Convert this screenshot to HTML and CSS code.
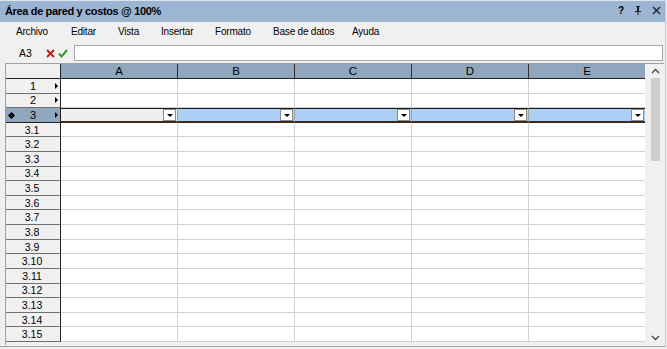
FILE: index.html
```html
<!DOCTYPE html>
<html lang="es">
<head>
  <meta charset="UTF-8">
  <title>Área de pared y costos @ 100%</title>
  <link rel="stylesheet" href="styles.css">
</head>
<body>
  <div class="window">
    <div class="titlebar">
      <span class="title">Área de pared y costos @ 100%</span>
      <span class="tools">
        <span class="tool">?</span>
        <svg class="tool pin" width="8" height="9" viewBox="0 0 8 9"><path d="M2 0h4v1H5v4h2v1H4.5v3h-1V6H1V5h2V1H2z" fill="#222"/></svg>
        <svg class="tool" width="9" height="9" viewBox="0 0 9 9"><path d="M1 1l7 7M8 1L1 8" stroke="#222" stroke-width="1.4"/></svg>
      </span>
    </div>

    <div class="menubar">
      <span class="menu m1">Archivo</span>
      <span class="menu m2">Editar</span>
      <span class="menu m3">Vista</span>
      <span class="menu m4">Insertar</span>
      <span class="menu m5">Formato</span>
      <span class="menu m6">Base de datos</span>
      <span class="menu">Ayuda</span>
    </div>

    <div class="formulabar">
      <span class="cellref">A3</span>
      <svg class="btn-cancel" width="9" height="9" viewBox="0 0 9 9"><path d="M1 1l7 7M8 1L1 8" stroke="#c8201c" stroke-width="2"/></svg>
      <svg class="btn-ok" width="10" height="9" viewBox="0 0 10 9"><path d="M1 4.5l2.6 3L9 1" stroke="#2f9a2a" stroke-width="2" fill="none"/></svg>
      <div class="formula"></div>
    </div>

    <div class="sheetwrap">
      <div class="sheet" id="sheet">
        <div class="row head">
          <div class="rh"></div>
          <div class="ch">A</div>
          <div class="ch">B</div>
          <div class="ch">C</div>
          <div class="ch">D</div>
          <div class="ch">E</div>
        </div>
      </div>
      <div class="scrollbar">
        <svg class="arrow" width="9" height="6" viewBox="0 0 9 6"><path d="M1 5l3.5-3.5L8 5" stroke="#444" stroke-width="1.3" fill="none"/></svg>
        <div class="track"><div class="thumb"></div></div>
        <svg class="arrow" width="9" height="6" viewBox="0 0 9 6"><path d="M1 1l3.5 3.5L8 1" stroke="#444" stroke-width="1.3" fill="none"/></svg>
      </div>
    </div>
  </div>

  <script>
    var sheet = document.getElementById('sheet');
    var labels = ['1', '2', '3'];
    for (var i = 1; i <= 15; i++) labels.push('3.' + i);

    labels.forEach(function (label) {
      var row = document.createElement('div');
      var sel = label === '3';
      var sub = label.indexOf('.') > -1;
      row.className = 'row' + (sel ? ' selected' : '') + (sub ? ' sub' : '');

      var rh = document.createElement('div');
      rh.className = 'rh';
      if (sel) rh.innerHTML += '<span class="dot"></span>';
      rh.innerHTML += '<span class="num">' + label + '</span>';
      if (!sub) rh.innerHTML += '<span class="tri"></span>';
      row.appendChild(rh);

      for (var c = 0; c < 5; c++) {
        var cell = document.createElement('div');
        cell.className = 'cell' + (sel && c === 0 ? ' active' : '');
        if (sel) cell.innerHTML = '<span class="drop"><span class="caret"></span></span>';
        row.appendChild(cell);
      }
      sheet.appendChild(row);
    });
  </script>
</body>
</html>
```

FILE: styles.css
```css
* { box-sizing: border-box; }
body {
  margin: 0;
  background-color: #f0f0f0;
  font-family: Tahoma, 'DejaVu Sans', sans-serif;
  font-size: 11px;
  color: #000;
}
.window {
  width: 666px;
  height: 347px;
  background-color: #f0f0f0;
  border-right: 1px solid #c8c8c8;
  border-bottom: 1px solid #a0a0a0;
  display: flex;
  flex-direction: column;
}
.titlebar {
  height: 22px;
  border-top: 1px solid #dde6f0;
  background-color: #9bb5d2;
  display: flex;
  align-items: center;
  padding: 0 4px 2px 5px;
}
.title {
  font-family: 'Liberation Sans', sans-serif;
  font-weight: bold;
  font-size: 11px;
  letter-spacing: -0.35px;
  flex: 1;
}
.tools {
  display: flex;
  align-items: center;
  gap: 10px;
}
.tool {
  font-family: 'Liberation Sans', sans-serif;
  font-weight: bold;
  font-size: 10px;
}
.menubar {
  height: 21px;
  display: flex;
  align-items: center;
  padding: 0 0 3px 16px;
  font-family: 'Liberation Sans', sans-serif;
  font-size: 10px;
  letter-spacing: -0.2px;
}
.menu { flex: none; }
.m1 { width: 55px; }
.m2 { width: 47px; }
.m3 { width: 43px; }
.m4 { width: 54px; }
.m5 { width: 58px; }
.m6 { width: 79px; }
.formulabar {
  height: 20px;
  display: flex;
  align-items: center;
  padding-left: 19px;
}
.cellref {
  font-family: 'Liberation Sans', sans-serif;
  font-size: 10.5px;
  width: 27px;
}
.btn-ok {
  margin-left: 3px;
}
.formula {
  margin-left: 6px;
  width: 589px;
  height: 16px;
  background-color: #fff;
  border: 1px solid #a8a8a8;
}
.sheetwrap {
  margin-left: 5px;
  width: 659px;
  height: 282px;
  display: flex;
  border-left: 1px solid #a0a0a0;
  border-top: 1px solid #a0a0a0;
  overflow: hidden;
}
.sheet {
  width: 640px;
  overflow: hidden;
}
.row {
  display: flex;
  height: 14.62px;
}
.row.head {
  height: 15px;
}
.rh {
  width: 55px;
  flex: none;
  position: relative;
  background-color: #f0f0f0;
  border-right: 1px solid #202020;
  border-bottom: 1px solid #707070;
  display: flex;
  align-items: center;
  justify-content: center;
  font-family: 'Liberation Sans', sans-serif;
  font-size: 11px;
}
.row.sub .rh .num {
  font-size: 10.5px;
  margin-left: -2px;
}
.row.head .rh {
  border-bottom: 1px solid #202020;
}
.ch {
  width: 117px;
  flex: none;
  background-color: #8fa6bd;
  border-right: 1px solid #303030;
  border-bottom: 1px solid #202020;
  text-align: center;
  font-family: 'Liberation Sans', sans-serif;
  font-size: 11.5px;
  line-height: 14px;
}
.cell {
  width: 117px;
  flex: none;
  background-color: #fff;
  border-right: 1px solid #d2d2d2;
  border-bottom: 1px solid #d2d2d2;
  position: relative;
}
.tri {
  position: absolute;
  right: 2px;
  top: 50%;
  margin-top: -3px;
  border-left: 3px solid #000;
  border-top: 3px solid transparent;
  border-bottom: 3px solid transparent;
}
.dot {
  position: absolute;
  left: 3px;
  top: 50%;
  margin-top: -2px;
  width: 5px;
  height: 5px;
  background-color: #000;
  transform: rotate(45deg);
}
.row.selected .rh {
  background-color: #8fa6bd;
  border-bottom: 1px solid #202020;
}
.row.selected .cell {
  background-color: #aad0f5;
  border-top: 1px solid #1a1a1a;
  border-bottom: 2px solid #3e2a1c;
  border-right: 1px solid #a0a0a0;
}
.row.selected .cell.active {
  background-color: #efefef;
}
.row.selected .cell:last-child {
  border-right: 1px solid #1a1a1a;
}
.drop {
  position: absolute;
  right: 1px;
  top: 0;
  bottom: 0;
  width: 13px;
  background-color: #fff;
  border: 1px solid #8a8a8a;
  display: flex;
  align-items: center;
  justify-content: center;
}
.caret {
  border-top: 3px solid #000;
  border-left: 3.5px solid transparent;
  border-right: 3.5px solid transparent;
}
.scrollbar {
  width: 18px;
  margin-left: 1px;
  background-color: #f0f0f0;
  display: flex;
  flex-direction: column;
  align-items: center;
}
.arrow {
  margin: 4px 0;
  flex: none;
}
.track {
  flex: 1;
  width: 100%;
  display: flex;
  justify-content: center;
}
.thumb {
  width: 9px;
  height: 83px;
  background-color: #cdcdcd;
}
```
